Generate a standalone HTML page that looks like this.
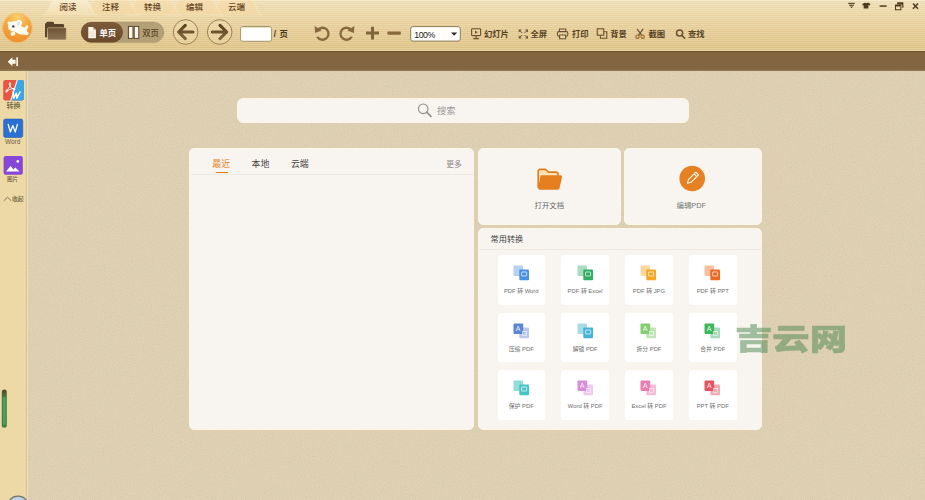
<!DOCTYPE html>
<html lang="zh-CN">
<head>
<meta charset="utf-8">
<title>PDF</title>
<style>
*{box-sizing:border-box;margin:0;padding:0}
html,body{width:925px;height:500px;overflow:hidden}
body{position:relative;background:#e0d2b6;font-family:"Liberation Sans","Noto Sans CJK SC",sans-serif;color:#5a4020}
.abs{position:absolute}
#top{left:0;top:0;width:925px;height:51px;background:linear-gradient(#fdeccc 0,#f3e2bd 1.2px,#f1dfb5 6px,#eedaa9 15px,#e8cf9a 32px,#e2c88b 48px,#e6cd96 50px,#e6cd96 51px)}
#stripes{left:0;top:0;width:925px;height:51px;background:repeating-linear-gradient(rgba(255,255,255,.10) 0,rgba(255,255,255,.10) 1px,rgba(120,90,30,.055) 1px,rgba(120,90,30,.055) 2px)}
#bar{left:0;top:51px;width:925px;height:19.5px;background:linear-gradient(#69502b 0,#816439 1.5px,#836641 4px,#836641 17.5px,#8e7450 19.5px)}
#side{left:0;top:70.5px;width:27px;height:430px;background:#ecd9a6;border-right:1px solid #d6c391;box-shadow:1px 0 0 rgba(255,250,235,.35)}
.t{position:absolute;white-space:nowrap;line-height:1}
.tab{font-size:8.5px;color:#664623;top:3.2px;font-weight:500}
.tb{font-size:8.3px;color:#574224;top:30.3px;font-weight:700}
.panel{position:absolute;background:#f8f5f0;border:1px solid #fbf6e6;border-radius:5px}
.tile{position:absolute;width:47.5px;height:49.5px;background:#fff;border-radius:3px}
.tile .lb{position:absolute;left:-10px;right:-10px;top:33.900px;text-align:center;font-size:5.850px;color:#6e6e6e;line-height:1;white-space:nowrap}
</style>
</head>
<body>
<div id="top" class="abs"></div>
<div id="stripes" class="abs"></div>
<svg class="abs" style="left:0;top:0" width="925" height="50" viewBox="0 0 925 50">
  <defs>
    <linearGradient id="gt" x1="0" y1="0" x2="0" y2="1"><stop offset="0" stop-color="#f7dcae" stop-opacity=".75"/><stop offset="1" stop-color="#f3d8a4" stop-opacity=".75"/></linearGradient>
    <linearGradient id="ga" x1="0" y1="0" x2="0" y2="1"><stop offset="0" stop-color="#f8ecd0"/><stop offset="1" stop-color="#f2deb0"/></linearGradient>
  </defs>
  <!-- inactive tabs -->
  <path d="M210.0 15 C215.5 15 216.5 0 222.0 0 L250.5 0 C256 0 257 15 262.5 15 Z" fill="url(#gt)" stroke="rgba(255,250,235,.45)" stroke-width=".6"/>
  <path d="M168.0 15 C173.5 15 174.5 0 180.0 0 L211.0 0 C216.5 0 217.5 15 223.0 15 Z" fill="url(#gt)" stroke="rgba(255,250,235,.45)" stroke-width=".6"/>
  <path d="M126.0 15 C131.5 15 132.5 0 138.0 0 L169.0 0 C174.5 0 175.5 15 181.0 15 Z" fill="url(#gt)" stroke="rgba(255,250,235,.45)" stroke-width=".6"/>
  <path d="M84.0 15 C89.5 15 90.5 0 96.0 0 L127.0 0 C132.5 0 133.5 15 139.0 15 Z" fill="url(#gt)" stroke="rgba(255,250,235,.45)" stroke-width=".6"/>
  <path d="M43.0 15 C48.5 15 49.5 0 55.0 0 L85.0 0 C90.5 0 91.5 15 97.0 15 Z" fill="url(#ga)" stroke="rgba(255,250,235,.45)" stroke-width=".6"/>
</svg>
<div class="t tab" style="left:59.5px">阅读</div>
<div class="t tab" style="left:102px">注释</div>
<div class="t tab" style="left:144px">转换</div>
<div class="t tab" style="left:186px">编辑</div>
<div class="t tab" style="left:228px">云端</div>


<!-- toolbar icons -->
<svg class="abs" style="left:0;top:0" width="925" height="50" viewBox="0 0 925 50">
  <defs>
    <radialGradient id="lg" cx=".5" cy=".12" r=".95"><stop offset="0" stop-color="#f9d06c"/><stop offset=".45" stop-color="#f4a743"/><stop offset=".8" stop-color="#f09433"/><stop offset="1" stop-color="#ee8e2e"/></radialGradient>
    <linearGradient id="ff" x1="0" y1="0" x2="0" y2="1"><stop offset="0" stop-color="#6d5434"/><stop offset="1" stop-color="#8a7152"/></linearGradient>
    <linearGradient id="pg" x1="0" y1="0" x2="0" y2="1"><stop offset="0" stop-color="#7d5b39"/><stop offset="1" stop-color="#6a4a2b"/></linearGradient><linearGradient id="ag" gradientUnits="userSpaceOnUse" x1="0" y1="24" x2="0" y2="40"><stop offset="0" stop-color="#553d20"/><stop offset="1" stop-color="#86693f"/></linearGradient><filter id="bl"><feGaussianBlur stdDeviation=".7"/></filter>
  </defs>
  <!-- logo -->
  <circle cx="17.400" cy="27.800" r="15.300" fill="#f6b75a" opacity=".6" filter="url(#bl)"/>
  <circle cx="17.400" cy="27.800" r="14.300" fill="url(#lg)"/>
  <g fill="#fdfaf2">
    <ellipse cx="14.600" cy="26.400" rx="6.600" ry="5.400"/>
    <ellipse cx="19" cy="23.200" rx="3" ry="3.300" transform="rotate(25 19 23.200)"/>
    <ellipse cx="9.300" cy="23.400" rx="1.700" ry="2" transform="rotate(-25 9.300 23.400)"/>
    <ellipse cx="20.800" cy="30.300" rx="6.600" ry="4" transform="rotate(14 20.800 30.300)"/>
    <ellipse cx="13" cy="33.800" rx="2.500" ry="1.800" transform="rotate(-20 13 33.800)"/>
    <ellipse cx="26.400" cy="33.400" rx="2.200" ry="1.900"/>
    <ellipse cx="26.600" cy="27.400" rx="1.500" ry="2.200" transform="rotate(35 26.600 27.400)"/>
  </g>
  <circle cx="13.300" cy="26.400" r="1.200" fill="#2d3f55"/>
  <ellipse cx="18.600" cy="23.600" rx="1.300" ry="1.900" fill="#dcdfe6" transform="rotate(25 18.600 23.600)"/>
  <!-- folder -->
  <path d="M45 24.2 q0-1 1-1.2 l.6-.8 q.3-.4 1-.4 h5.2 q.8 0 1 .6 l.5 1.6 h8.6 q1.2 0 1.2 1.2 v3 h-16 l-.9 9 h-2.2 z" fill="#5b442b"/>
  <path d="M47.5 28.6 q0-.9 1-.9 h16.8 q1 0 1 .9 v10.4 q0 .9-1 .9 h-16.800 q-1 0-1-.9 z" fill="url(#ff)" stroke="#e9d6a6" stroke-width=".5"/>
  <!-- single / double toggle -->
  <rect x="81" y="22" width="83" height="20.6" rx="10.3" fill="#b39f78"/>
  <rect x="81" y="22" width="83" height="20.6" rx="10.3" fill="none" stroke="#8f7a50" stroke-width=".5" opacity=".5"/>
  <rect x="81" y="22" width="42" height="20.6" rx="10.3" fill="url(#pg)"/>
  <path d="M88.300 27 h4.600 l3 3 v8.200 h-7.600 z" fill="#fbf6ea"/>
  <path d="M92.900 27 v3 h3 z" fill="#cdbd9c"/>
  <path d="M89.600 32 h5 M89.600 34 h5 M89.600 36 h5" stroke="#c9b79a" stroke-width=".7" stroke-dasharray="1 .6"/>
  <path d="M130.700 28 v9 M136.500 28 v9" stroke="#cbbb9e" stroke-width=".7" stroke-dasharray="1 .8"/>
  <rect x="128.400" y="26.400" width="4.600" height="12" fill="#fbf6ea" stroke="#5a4428" stroke-width="1"/>
  <rect x="134.200" y="26.400" width="4.600" height="12" fill="#fbf6ea" stroke="#5a4428" stroke-width="1"/>
  <!-- arrows -->
  <g fill="none" stroke="#866c44" stroke-width=".8">
    <circle cx="185.600" cy="32" r="12.300" fill="rgba(255,240,200,.18)"/>
    <circle cx="219.700" cy="32" r="12.300" fill="rgba(255,240,200,.18)"/>
  </g>
  <g fill="none" stroke="url(#ag)" stroke-width="3.100" stroke-linecap="round" stroke-linejoin="round">
    <path d="M193 32 h-14 M185.300 25.400 l-6.700 6.600 l6.700 6.600"/>
    <path d="M212.300 32 h14 M220 25.400 l6.700 6.600 l-6.700 6.600"/>
  </g>
  <!-- page box -->
  <rect x="240.600" y="26.500" width="31" height="14.800" rx="2.200" fill="#fffefa" stroke="#a39872" stroke-width="1"/>
  <path d="M242 27.600 h28.200" stroke="#d9d2ba" stroke-width=".8"/>
  <!-- rotate -->
  <g fill="none" stroke="#86693f" stroke-width="2.300" stroke-linecap="butt">
    <path d="M317.600 30.300 a6 6 0 1 1 -.300 6.400"/>
    <path d="M351.400 30.300 a6 6 0 1 0 .300 6.400"/>
  </g>
  <path d="M314.600 26 l.500 7 l6.600 -2.400 z" fill="#86693f"/>
  <path d="M354.400 26 l-.500 7 l-6.600 -2.400 z" fill="#86693f"/>
  <!-- plus minus -->
  <path d="M366 31.600 h5 v-4.800 h3 v4.800 h5 v3 h-5 v4.800 h-3 v-4.800 h-5 z" fill="#7f6440"/>
  <rect x="387.400" y="31.500" width="13.400" height="3.200" rx=".8" fill="#86693f"/>
  <!-- zoom select -->
  <rect x="410.700" y="26.600" width="49.600" height="14.500" rx="2.200" fill="#fffefa" stroke="#8d7d58" stroke-width="1"/>
  <path d="M451 32.500 h6.200 l-3.100 3.300 z" fill="#2a2a2a"/>
</svg>
<div class="t" style="left:99.500px;top:29.100px;font-size:8.300px;font-weight:700;color:#fff">单页</div>
<div class="t" style="left:142.300px;top:29.100px;font-size:8.300px;font-weight:500;color:#5b4323">双页</div>
<div class="t" style="left:273.800px;top:30px;font-size:8.300px;font-weight:700;color:#4a3820;word-spacing:1px">/ 页</div>
<div class="t" style="left:414.200px;top:30.800px;font-size:8.800px;color:#222;letter-spacing:-.45px">100%</div>

<!-- toolbar right buttons -->
<svg class="abs" style="left:0;top:0" width="925" height="50" viewBox="0 0 925 50">
  <g fill="none" stroke="#6a5230" stroke-width="1.100">
    <!-- slideshow -->
    <rect x="471.600" y="28.800" width="9" height="6.800" rx=".6"/>
    <path d="M476.100 35.600 v2.800 M473.300 38.600 h5.600"/>
    <path d="M475 30.600 l2.800 1.600 l-2.800 1.600 z" fill="#6a5230" stroke="none"/>
    <!-- fullscreen -->
    <g stroke-width="1" stroke-dasharray="none">
      <path d="M518.700 29.500 h3 l-3 3 z M528 29.500 v3 l-3 -3 z M528 38.500 h-3 l3 -3 z M518.700 38.500 v-3 l3 3 z" fill="#6a5230" stroke="none"/>
      <path d="M520 30.800 l2.200 2.200 M526.700 30.800 l-2.200 2.200 M526.700 37.200 l-2.200 -2.200 M520 37.200 l2.200 -2.200" stroke-width="1"/>
    </g>
    <!-- print -->
    <path d="M559.400 31.600 v-2.600 h6.400 v2.600"/>
    <rect x="557.400" y="31.600" width="10.400" height="4.600" rx="1.400"/>
    <path d="M559.600 35 h6 v3.800 h-6 z" fill="#ecd59f"/>
    <!-- background -->
    <rect x="597.300" y="28.800" width="6.400" height="6.400"/>
    <path d="M600.400 35.200 v3 h6.400 v-6.400 h-3.100" />
    <!-- scissors -->
    <circle cx="637.500" cy="36.700" r="1.700" stroke="#99642c"/>
    <circle cx="642.700" cy="36.700" r="1.700" stroke="#99642c"/>
    <path d="M638.400 35.300 l4.800 -6.500 M641.800 35.300 l-4.800 -6.500" stroke-width="1.200"/>
    <!-- find -->
    <circle cx="679.600" cy="33" r="3.100" stroke-width="1.500"/>
    <path d="M682 35.500 l2.400 2.500" stroke-width="1.800" stroke-linecap="round"/>
  </g>
  <!-- window controls -->
  <g fill="#4f3a1e">
    <rect x="848.200" y="2.800" width="6.600" height="1.100"/>
    <rect x="849.200" y="4.700" width="4.600" height="1.100"/>
    <path d="M850 6.600 h3 l-1.500 1.600 z"/>
    <path d="M862.300 4 l2.200 -1.300 h.9 q1 .9 2 0 h.9 l2.200 1.300 l-1 1.600 l-1.100 -.5 v3.500 h-4.800 v-3.500 l-1.100 .5 z"/>
    <rect x="879.600" y="5.300" width="7" height="1.500"/>
    <path d="M897.200 2.200 h6.200 v5.600 h-1.200 v-3.400 h-5 z"/>
    <path d="M895 4.600 h6.400 v5.600 h-6.400 z M896 6.600 v2.600 h4.400 v-2.600 z" fill-rule="evenodd"/>
  </g>
  <path d="M913 3.400 l5 5.400 M918 3.400 l-5 5.400" stroke="#4f3a1e" stroke-width="1.500" fill="none"/>
</svg>
<div class="t tb" style="left:484px">幻灯片</div>
<div class="t tb" style="left:530.500px">全屏</div>
<div class="t tb" style="left:572px">打印</div>
<div class="t tb" style="left:610.300px">背景</div>
<div class="t tb" style="left:648.500px">截图</div>
<div class="t tb" style="left:688px">查找</div>
<div id="bar" class="abs"></div>
<div id="side" class="abs"></div>
<svg class="abs" style="left:28px;top:71px" width="897" height="429"><filter id="nz" x="0" y="0" width="100%" height="100%"><feTurbulence type="fractalNoise" baseFrequency=".9" numOctaves="1" seed="7"/><feColorMatrix type="matrix" values="0 0 0 0 .45  0 0 0 0 .36  0 0 0 0 .2  .9 .9 .9 0 -1.17"/></filter><rect width="897" height="429" filter="url(#nz)" opacity=".3"/></svg>

<!-- brown bar icon -->
<svg class="abs" style="left:0;top:50.500px" width="40" height="20" viewBox="0 0 40 20">
  <path d="M7.700 10.700 l4.700 -4.500 v2.500 h3.200 v4 h-3.200 v2.500 z" fill="#fffaf0"/>
  <rect x="16.300" y="6.300" width="1.700" height="8.800" fill="#fff3dc"/>
</svg>
<!-- sidebar -->
<svg class="abs" style="left:0;top:70px" width="27" height="430" viewBox="0 70 27 430">
  <defs>
    <clipPath id="c1"><rect x="3.200" y="80" width="20.800" height="20.500" rx="2.200"/></clipPath>
  </defs>
  <g clip-path="url(#c1)">
    <rect x="3" y="80" width="21" height="21" fill="#e9563f"/>
    <path d="M17.200 80 h7 v21 h-13.500 z" fill="#3aa7e4"/>
    <path d="M16.600 80 l1.200 0 l-6.500 21 l-1.200 0 z" fill="#fff" opacity=".9"/>
  </g>
  <path d="M5.400 90.500 q3.800 -1 5 -6.500 q.4 -1.600 -.6 -1.600 q-1 0 -.4 2 q1.400 4.400 4.600 5.200 q1.400 .3 1.200 -.5 q-.3 -.9 -2.400 -.5 q-3.600 .7 -6.600 2.600 q-1 .8 -.2 1.100 q.8 .2 1.900 -1.500" fill="none" stroke="#fff" stroke-width=".9"/>
  <path d="M13 91.800 l.7 6.400 l2.600 -5 l.5 5 l3.300 -6.400" fill="none" stroke="#fff" stroke-width="1.500" stroke-linejoin="round" stroke-linecap="round"/>
  <rect x="3.600" y="119" width="19.200" height="18.500" rx="1.800" fill="#2a6fd2"/>
  <rect x="3.600" y="119" width="19.200" height="18.500" rx="1.800" fill="none" stroke="#1f57ad" stroke-width=".5"/>
  <path d="M8.200 124.400 l2.200 7.600 l2.400 -6.400 l2.400 6.400 l2.200 -7.600" fill="none" stroke="#fff" stroke-width="1.300" stroke-linejoin="round" stroke-linecap="round"/>
  <rect x="3.600" y="156" width="19.200" height="18.700" rx="2" fill="#8646d6"/>
  <path d="M6 171.600 l4.600 -5.600 l2.800 3.400 l1.800 -2 l4.400 4.200 z" fill="#fff"/>
  <circle cx="17.800" cy="161.400" r="1.350" fill="#fff"/>
  <path d="M3.800 200.800 l3.700 -3.600 l3.700 3.600" fill="none" stroke="#6a5d3c" stroke-width=".8"/>
  <!-- green handle -->
  <linearGradient id="hg" x1="0" y1="0" x2="0" y2="1"><stop offset="0" stop-color="#5a4526"/><stop offset=".22" stop-color="#3f7f45"/><stop offset="1" stop-color="#3b8044"/></linearGradient>
  <rect x="1.800" y="389.500" width="5" height="38.200" rx="2.500" fill="url(#hg)"/>
  <rect x="3" y="397" width="2.600" height="28" rx="1.300" fill="#58a35c" opacity=".85"/>
  <!-- bottom bubble -->
  <circle cx="18" cy="507.200" r="11" fill="#bdd3e2" stroke="#6f7466" stroke-width="1.200"/>
</svg>
<div class="t" style="left:0;width:27px;text-align:center;top:103.400px;font-size:7.100px;font-weight:500;color:#6a5d3c">转换</div>
<div class="t" style="left:0;width:25.400px;text-align:center;top:139.200px;font-size:6.400px;color:#6a5d3c">Word</div>
<div class="t" style="left:0;width:25px;text-align:center;top:177px;font-size:5.600px;font-weight:500;color:#70633f">图片</div>
<div class="t" style="left:12px;top:196.900px;font-size:5.850px;font-weight:500;color:#6a5d3c">收起</div>
<!-- main -->
<div class="abs" style="left:237px;top:98px;width:452px;height:24.500px;background:#f8f5f0;border:1px solid #fbf5e4;border-radius:6px"></div>
<svg class="abs" style="left:415px;top:100px" width="20" height="20" viewBox="415 100 20 20"><circle cx="423.200" cy="108.800" r="4.800" fill="none" stroke="#8d8d8d" stroke-width="1.100"/><path d="M426.800 112.400 l4.200 4" stroke="#8d8d8d" stroke-width="1.600" stroke-linecap="round"/></svg>
<div class="t" style="left:437px;top:106.600px;font-size:9.300px;color:#9a9a9a">搜索</div>

<div class="panel" style="left:189px;top:147.500px;width:285.200px;height:282.300px"></div>
<div class="abs" style="left:190px;top:173.600px;width:283.500px;height:1px;background:#eeeae2"></div>
<div class="t" style="left:212.300px;top:159.800px;font-size:8.900px;color:#e2852a">最近</div>
<div class="abs" style="left:216px;top:171.600px;width:11.600px;height:1.500px;background:#e07b1f;border-radius:1px"></div>
<div class="t" style="left:251.600px;top:159.800px;font-size:8.900px;color:#444">本地</div>
<div class="t" style="left:291px;top:159.800px;font-size:8.900px;color:#444">云端</div>
<div class="t" style="left:446.300px;top:161px;font-size:7.800px;color:#8a8a8a">更多</div>

<div class="panel" style="left:477.500px;top:147.500px;width:143.500px;height:77.800px"></div>
<div class="panel" style="left:623.500px;top:147.500px;width:138.500px;height:77.800px"></div>
<svg class="abs" style="left:530px;top:160px" width="40" height="36" viewBox="530 160 40 36">
  <path d="M538.200 188 v-16.400 q0 -2.200 2.200 -2.200 h4.200 q1.400 0 2.200 1 l1.400 1.700 h7.600 q2.200 0 2.200 2.200 v1.500" fill="#fbe1b4" stroke="#e07b1f" stroke-width="1.600" stroke-linejoin="round"/>
  <path d="M541.800 175.300 h19 q1.700 0 1.300 1.700 l-2.600 11.200 q-.4 1.500 -2 1.500 h-17.700 q-2 0 -1.600 -1.900 l2 -10.800 q.3 -1.700 1.600 -1.700 z" fill="#e67f20"/>
</svg>
<svg class="abs" style="left:676px;top:162px" width="34" height="34" viewBox="676 162 34 34">
  <circle cx="692.200" cy="178.500" r="12.800" fill="#e58023"/>
  <g transform="rotate(45 692.200 178.500)" fill="none" stroke="#fff" stroke-width="1" stroke-linejoin="round">
    <path d="M690.300 171.500 h3.800 v10.500 l-1.900 3.200 l-1.900 -3.200 z"/>
    <path d="M690.300 174 h3.800"/>
  </g>
</svg>
<div class="t" style="left:534.500px;top:202.200px;font-size:7.400px;color:#666">打开文档</div>
<div class="t" style="left:676.500px;top:201.800px;font-size:7.400px;color:#777">编辑PDF</div>

<div class="panel" style="left:477.500px;top:228.300px;width:284.500px;height:201.700px"></div>
<div class="t" style="left:490.500px;top:235.500px;font-size:8.200px;color:#444">常用转换</div>
<div class="abs" style="left:478.500px;top:248.800px;width:282.500px;height:1px;background:#eeeae2"></div>
<div class="tile" style="left:497.5px;top:255.3px"><svg class="abs" style="left:15.300px;top:10.100px" width="17" height="16" viewBox="0 0 17 16"><rect x=".5" y=".5" width="9.500" height="10.500" rx="1" fill="#b6d2f3"/><rect x="6.300" y="4.400" width="9.700" height="10.800" rx="1" fill="#4a90e2"/><rect x="8.600" y="7" width="5" height="4" rx=".4" fill="none" stroke="#fff" stroke-width=".8" opacity=".85"/></svg><div class="lb">PDF 转 Word</div></div>
<div class="tile" style="left:561.4px;top:255.3px"><svg class="abs" style="left:15.300px;top:10.100px" width="17" height="16" viewBox="0 0 17 16"><rect x=".5" y=".5" width="9.500" height="10.500" rx="1" fill="#a9dcbc"/><rect x="6.300" y="4.400" width="9.700" height="10.800" rx="1" fill="#2fae62"/><rect x="8.600" y="7" width="5" height="4" rx=".4" fill="none" stroke="#fff" stroke-width=".8" opacity=".85"/></svg><div class="lb">PDF 转 Excel</div></div>
<div class="tile" style="left:625.2px;top:255.3px"><svg class="abs" style="left:15.300px;top:10.100px" width="17" height="16" viewBox="0 0 17 16"><rect x=".5" y=".5" width="9.500" height="10.500" rx="1" fill="#fad79a"/><rect x="6.300" y="4.400" width="9.700" height="10.800" rx="1" fill="#f5a623"/><rect x="8.600" y="7" width="5" height="4" rx=".4" fill="none" stroke="#fff" stroke-width=".8" opacity=".85"/></svg><div class="lb">PDF 转 JPG</div></div>
<div class="tile" style="left:689px;top:255.3px"><svg class="abs" style="left:15.300px;top:10.100px" width="17" height="16" viewBox="0 0 17 16"><rect x=".5" y=".5" width="9.500" height="10.500" rx="1" fill="#f7bf9f"/><rect x="6.300" y="4.400" width="9.700" height="10.800" rx="1" fill="#ee6a23"/><rect x="8.600" y="7" width="5" height="4" rx=".4" fill="none" stroke="#fff" stroke-width=".8" opacity=".85"/></svg><div class="lb">PDF 转 PPT</div></div>
<div class="tile" style="left:497.5px;top:312.8px"><svg class="abs" style="left:15.300px;top:10.100px" width="17" height="16" viewBox="0 0 17 16"><rect x="6.300" y="4.400" width="9.700" height="10.800" rx="1" fill="#b9c9ec"/><rect x=".5" y=".5" width="9.700" height="10.500" rx="1" fill="#5b86d6"/><path d="M3.200 8 l2 -5 l2 5 M4 6.300 h2.500" fill="none" stroke="#fff" stroke-width=".8" opacity=".85"/><rect x="9.500" y="8.500" width="4" height="4" fill="none" stroke="#fff" stroke-width=".7" opacity=".8"/></svg><div class="lb">压缩 PDF</div></div>
<div class="tile" style="left:561.4px;top:312.8px"><svg class="abs" style="left:15.300px;top:10.100px" width="17" height="16" viewBox="0 0 17 16"><rect x=".5" y=".5" width="9.500" height="10.500" rx="1" fill="#a8dbea"/><rect x="6.300" y="4.400" width="9.700" height="10.800" rx="1" fill="#45b3d6"/><rect x="8.600" y="7" width="5" height="4" rx=".4" fill="none" stroke="#fff" stroke-width=".8" opacity=".85"/></svg><div class="lb">解锁 PDF</div></div>
<div class="tile" style="left:625.2px;top:312.8px"><svg class="abs" style="left:15.300px;top:10.100px" width="17" height="16" viewBox="0 0 17 16"><rect x="6.300" y="4.400" width="9.700" height="10.800" rx="1" fill="#c0e6b6"/><rect x=".5" y=".5" width="9.700" height="10.500" rx="1" fill="#84cd72"/><path d="M3.200 8 l2 -5 l2 5 M4 6.300 h2.500" fill="none" stroke="#fff" stroke-width=".8" opacity=".85"/><rect x="9.500" y="8.500" width="4" height="4" fill="none" stroke="#fff" stroke-width=".7" opacity=".8"/></svg><div class="lb">拆分 PDF</div></div>
<div class="tile" style="left:689px;top:312.8px"><svg class="abs" style="left:15.300px;top:10.100px" width="17" height="16" viewBox="0 0 17 16"><rect x="6.300" y="4.400" width="9.700" height="10.800" rx="1" fill="#a8dcc0"/><rect x=".5" y=".5" width="9.700" height="10.500" rx="1" fill="#3fb85c"/><path d="M3.200 8 l2 -5 l2 5 M4 6.300 h2.500" fill="none" stroke="#fff" stroke-width=".8" opacity=".85"/><rect x="9.500" y="8.500" width="4" height="4" fill="none" stroke="#fff" stroke-width=".7" opacity=".8"/></svg><div class="lb">合并 PDF</div></div>
<div class="tile" style="left:497.5px;top:370.2px"><svg class="abs" style="left:15.300px;top:10.100px" width="17" height="16" viewBox="0 0 17 16"><rect x=".5" y=".5" width="9.500" height="10.500" rx="1" fill="#92dcda"/><rect x="6.300" y="4.400" width="9.700" height="10.800" rx="1" fill="#48c4c4"/><rect x="8.600" y="7" width="5" height="4" rx=".4" fill="none" stroke="#fff" stroke-width=".8" opacity=".85"/></svg><div class="lb">保护 PDF</div></div>
<div class="tile" style="left:561.4px;top:370.2px"><svg class="abs" style="left:15.300px;top:10.100px" width="17" height="16" viewBox="0 0 17 16"><rect x="6.300" y="4.400" width="9.700" height="10.800" rx="1" fill="#efc8f0"/><rect x=".5" y=".5" width="9.700" height="10.500" rx="1" fill="#d78fdc"/><path d="M3.200 8 l2 -5 l2 5 M4 6.300 h2.500" fill="none" stroke="#fff" stroke-width=".8" opacity=".85"/><rect x="9.500" y="8.500" width="4" height="4" fill="none" stroke="#fff" stroke-width=".7" opacity=".8"/></svg><div class="lb">Word 转 PDF</div></div>
<div class="tile" style="left:625.2px;top:370.2px"><svg class="abs" style="left:15.300px;top:10.100px" width="17" height="16" viewBox="0 0 17 16"><rect x="6.300" y="4.400" width="9.700" height="10.800" rx="1" fill="#f6bcd5"/><rect x=".5" y=".5" width="9.700" height="10.500" rx="1" fill="#ea7eb0"/><path d="M3.200 8 l2 -5 l2 5 M4 6.300 h2.500" fill="none" stroke="#fff" stroke-width=".8" opacity=".85"/><rect x="9.500" y="8.500" width="4" height="4" fill="none" stroke="#fff" stroke-width=".7" opacity=".8"/></svg><div class="lb">Excel 转 PDF</div></div>
<div class="tile" style="left:689px;top:370.2px"><svg class="abs" style="left:15.300px;top:10.100px" width="17" height="16" viewBox="0 0 17 16"><rect x="6.300" y="4.400" width="9.700" height="10.800" rx="1" fill="#f3abb2"/><rect x=".5" y=".5" width="9.700" height="10.500" rx="1" fill="#e25563"/><path d="M3.200 8 l2 -5 l2 5 M4 6.300 h2.500" fill="none" stroke="#fff" stroke-width=".8" opacity=".85"/><rect x="9.500" y="8.500" width="4" height="4" fill="none" stroke="#fff" stroke-width=".7" opacity=".8"/></svg><div class="lb">PPT 转 PDF</div></div>

<!-- watermark -->
<div class="t" style="left:735.300px;top:324.200px;font-size:27.900px;font-weight:900;color:rgb(75,135,80);opacity:.5;-webkit-text-stroke:.55px rgb(75,135,80);transform-origin:0 0;transform:scale(1.338,1.04);letter-spacing:0;font-family:'Noto Sans CJK SC',sans-serif">吉云网</div>
</body>
</html>
